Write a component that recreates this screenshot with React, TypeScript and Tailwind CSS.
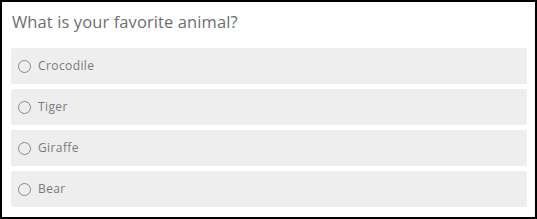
export default function App() {
  const options = ['Crocodile', 'Tiger', 'Giraffe', 'Bear']

  return (
    <div className="w-[537px] h-[219px] border-2 border-black bg-white px-[9px] pt-[6px] font-['Open_Sans',sans-serif]">
      <h1 className="text-[16.5px] leading-[28px] text-[#6e6e6e] tracking-[0.1px] ml-[1px]">
        What is your favorite animal?
      </h1>
      <div className="mt-[12px] flex flex-col gap-[5px] w-[516px]">
        {options.map((opt) => (
          <label
            key={opt}
            className="flex items-center h-[36px] rounded-[2px] bg-[#eeeeee] pl-[7px] gap-[7px]"
          >
            <span className="w-[13px] h-[13px] rounded-full border-[1.5px] border-[#8a8a8a] bg-transparent" />
            <span className="text-[12px] tracking-[0.4px] text-[#7a7a7a]">{opt}</span>
          </label>
        ))}
      </div>
    </div>
  )
}
